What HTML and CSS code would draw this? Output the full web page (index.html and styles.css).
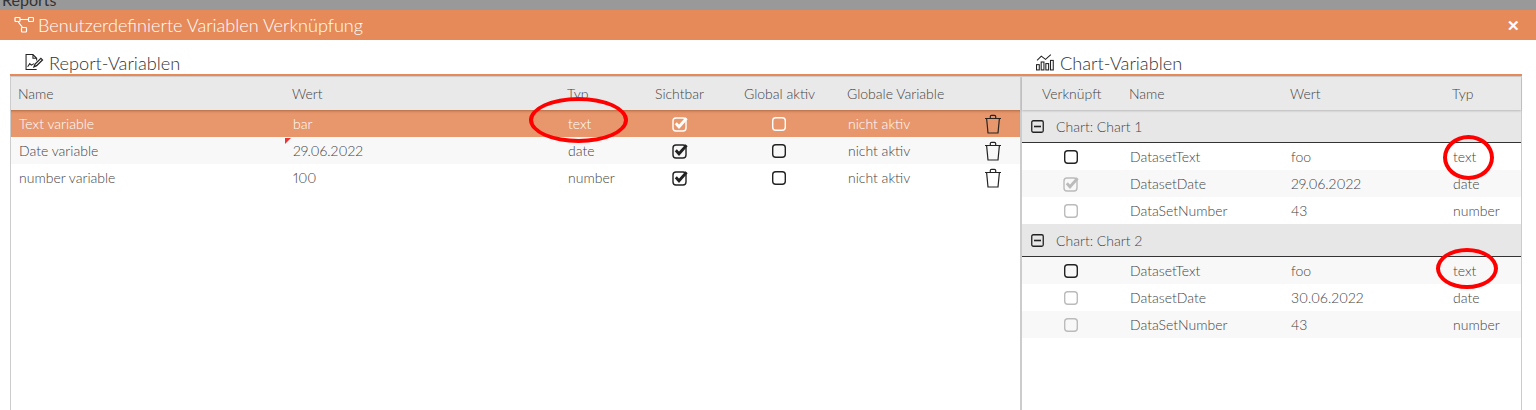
FILE: index.html
```html
<!DOCTYPE html>
<html lang="de">
<head>
<meta charset="utf-8">
<title>Benutzerdefinierte Variablen Verknüpfung</title>
<link rel="stylesheet" href="styles.css">
</head>
<body>
<svg class="defs" width="0" height="0" aria-hidden="true">
  <defs>
    <symbol id="check" viewBox="0 0 16 16">
      <rect x="1" y="2" width="13" height="13" rx="3" fill="none" stroke="currentColor" stroke-width="1.4"/>
      <path d="M3.8 7.2l3.2 3.6 7.6-8.6" fill="none" stroke="currentColor" stroke-width="2.8"/>
    </symbol>
    <symbol id="box" viewBox="0 0 16 16">
      <rect x="1.7" y="1.7" width="12.6" height="12.6" rx="3" fill="none" stroke="currentColor" stroke-width="1.4"/>
    </symbol>
    <symbol id="trash" viewBox="0 0 18 20">
      <path d="M1 4.5h16M2.6 4.5l1.4 14.5h10l1.4-14.5M6.3 4.5V2.6q0-1.3 1.3-1.3h2.8q1.3 0 1.3 1.3v1.9" fill="none" stroke="currentColor" stroke-width="1.2"/>
    </symbol>
    <symbol id="minus" viewBox="0 0 13 13">
      <rect x=".75" y=".75" width="11.5" height="11.5" rx="1.5" fill="none" stroke="currentColor" stroke-width="1.3"/>
      <path d="M3 6.5h7" stroke="currentColor" stroke-width="1.6"/>
    </symbol>
  </defs>
</svg>
<div class="backdrop"><span class="backdrop-text">Reports</span></div>
<header class="titlebar">
  <svg class="title-icon" viewBox="0 0 20 18" aria-hidden="true">
    <g fill="none" stroke="currentColor" stroke-width="1.2">
      <rect x="1" y="1.5" width="5" height="4" rx=".8"/>
      <rect x="14.5" y="1.5" width="5" height="4" rx=".8"/>
      <rect x="7.5" y="11.5" width="5" height="4.5" rx=".8"/>
      <path d="M6 3.5h8.5M4 5.5l4.5 6"/>
    </g>
  </svg>
  <span class="title-text">Benutzerdefinierte Variablen Verknüpfung</span>
  <span class="close">✕</span>
</header>
<main class="content">
  <section class="left">
    <h2 class="section-title">
      <svg class="section-icon" viewBox="0 0 18 17" aria-hidden="true">
        <g fill="none" stroke="#222" stroke-width="1">
          <path d="M11.5 15.5H1.5V1.5h6.5l3.5 3.5v2M8 1.5V5h3.5"/>
          <path d="M3 13l2-3 1.5 1.5L9 10"/>
          <path d="M9 13l1-2.5 5.5-5.5 1.5 1.5-5.5 5.5z" stroke-width="1.2"/>
        </g>
      </svg>
      Report-Variablen
    </h2>
    <div class="panel panel-left">
      <div class="row-l head">
        <span>Name</span><span>Wert</span><span>Typ</span><span>Sichtbar</span><span>Global aktiv</span><span>Globale Variable</span><span></span>
      </div>
      <div class="row-l selected">
        <span class="c1">Text variable</span><span class="c2">bar</span><span class="c3">text</span>
        <svg class="ic ic-check"><use href="#check"/></svg><svg class="ic ic-box"><use href="#box"/></svg>
        <span class="c6">nicht aktiv</span><svg class="ic-trash trash-dark"><use href="#trash"/></svg>
      </div>
      <div class="row-l alt">
        <span class="c1">Date variable</span><span class="c2 flagged">29.06.2022</span><span class="c3">date</span>
        <svg class="ic ic-check"><use href="#check"/></svg><svg class="ic ic-box"><use href="#box"/></svg>
        <span class="c6">nicht aktiv</span><svg class="ic-trash"><use href="#trash"/></svg>
      </div>
      <div class="row-l">
        <span class="c1">number variable</span><span class="c2">100</span><span class="c3">number</span>
        <svg class="ic ic-check"><use href="#check"/></svg><svg class="ic ic-box"><use href="#box"/></svg>
        <span class="c6">nicht aktiv</span><svg class="ic-trash"><use href="#trash"/></svg>
      </div>
    </div>
  </section>
  <section class="right">
    <h2 class="section-title">
      <svg class="section-icon" viewBox="0 0 18 17" aria-hidden="true">
        <g fill="none" stroke="#222" stroke-width="1">
          <path d="M1.5 7l4-4 4 3 5-4.5"/>
          <rect x="1" y="11" width="2.6" height="5"/>
          <rect x="5.4" y="8.5" width="2.6" height="7.5"/>
          <rect x="9.8" y="10" width="2.6" height="6"/>
          <rect x="14.2" y="7" width="2.6" height="9"/>
        </g>
      </svg>
      Chart-Variablen
    </h2>
    <div class="panel panel-right">
      <div class="row-r head head-r">
        <span>Verknüpft</span><span>Name</span><span>Wert</span><span>Typ</span>
      </div>
      <div class="group"><svg class="ic-minus"><use href="#minus"/></svg>Chart: Chart 1</div>
      <div class="row-r">
        <svg class="ic"><use href="#box"/></svg><span class="c1">DatasetText</span><span class="c2">foo</span><span class="c3">text</span>
      </div>
      <div class="row-r alt">
        <svg class="ic muted"><use href="#check"/></svg><span class="c1">DatasetDate</span><span class="c2">29.06.2022</span><span class="c3">date</span>
      </div>
      <div class="row-r">
        <svg class="ic muted"><use href="#box"/></svg><span class="c1">DataSetNumber</span><span class="c2">43</span><span class="c3">number</span>
      </div>
      <div class="group"><svg class="ic-minus"><use href="#minus"/></svg>Chart: Chart 2</div>
      <div class="row-r alt">
        <svg class="ic"><use href="#box"/></svg><span class="c1">DatasetText</span><span class="c2">foo</span><span class="c3">text</span>
      </div>
      <div class="row-r">
        <svg class="ic muted"><use href="#box"/></svg><span class="c1">DatasetDate</span><span class="c2">30.06.2022</span><span class="c3">date</span>
      </div>
      <div class="row-r alt">
        <svg class="ic muted"><use href="#box"/></svg><span class="c1">DataSetNumber</span><span class="c2">43</span><span class="c3">number</span>
      </div>
    </div>
  </section>
</main>
<div class="mark mark-1"></div>
<div class="mark mark-2"></div>
<div class="mark mark-3"></div>
</body>
</html>
```
FILE: styles.css
```css
* { box-sizing: border-box; }
html, body { margin: 0; height: 410px; overflow: hidden; background: #fff; }
body { font-family: Lato, "Open Sans", sans-serif; font-weight: 400; color: #555; position: relative; }
.defs { position: absolute; }
.backdrop { height: 10px; background: #999; overflow: hidden; }
.backdrop-text { display: block; margin: -10px 0 0 2px; font-size: 16px; line-height: 19px; color: #333; }
.titlebar { height: 30px; background: #e68a5a; color: #fff; display: flex; align-items: center; padding-left: 14px; }
.title-icon { width: 20px; height: 18px; margin-right: 4px; }
.title-text { font-size: 18.1px; font-weight: 300; flex: 1; color: #fff; }
.close { font-size: 15px; font-weight: 700; margin-right: 16px; color: #fff; }
.content { display: flex; padding-left: 10px; height: 370px; width: 1523px; }
.left { width: 1010px; display: flex; flex-direction: column; }
.right { width: 502px; display: flex; flex-direction: column; }
.section-title { margin: 0; height: 36px; border-bottom: 2px solid #e68a5a; display: flex; align-items: flex-end; font-size: 18.2px; font-weight: 300; color: #333; line-height: 22px; padding-left: 14px; }
.right .section-title { padding-left: 15px; }
.section-icon { width: 20px; height: 18px; margin: 0 5px 3px 0; }
.panel { flex: 1; border-top: 1px solid #ccc; }
.panel-left { border-left: 1px solid #ccc; }
.panel-right { border-left: 2px solid #ccc; border-right: 1px solid #ccc; }
.row-l, .row-r { display: grid; height: 27px; align-items: center; font-size: 14px; font-weight: 300; color: #444; font-variant-numeric: proportional-nums; }
.row-l { grid-template-columns: 274px 275px 88px 89px 103px 136px 1fr; padding-left: 8px; }
.row-r { grid-template-columns: 108px 161px 162px 1fr; }
.row-r .ic { justify-self: start; margin-left: 41px; }
.head { height: 33px; background: #e9e9e9; }
.row-l.head { padding-left: 7px; }
.head-r { grid-template-columns: 107px 161px 162px 1fr; box-shadow: 0 1px 2px rgba(0,0,0,.2); position: relative; }
.head-r span:first-child { margin-left: 20px; }
.selected { background: #e8976d; color: #fff; box-shadow: inset 0 3px 3px -2px rgba(120,60,20,.5); }
.alt { background: #f8f8f8; }
.ic { width: 16px; height: 16px; color: #222; }
.ic.muted { color: #bbb; }
.ic-check { margin-left: 16px; }
.ic-box { margin-left: 26px; }
.selected .ic { color: #fff; }
.ic-trash { width: 18px; height: 20px; color: #222; justify-self: start; }
.trash-dark { color: #2b2320; }
.flagged { position: relative; }
.flagged::before { content: ""; position: absolute; left: -8px; top: -4px; border-style: solid; border-width: 6px 6px 0 0; border-color: #e33 transparent transparent transparent; }
.group { height: 33px; background: #e7e7e7; border-bottom: 1px solid #333; display: flex; align-items: center; font-size: 14px; font-weight: 300; color: #444; padding-left: 9px; }
.ic-minus { width: 13px; height: 13px; margin-right: 12px; color: #222; }
.mark { position: absolute; border: 4px solid #f00; border-radius: 50%; }
.mark-1 { left: 529px; top: 97px; width: 99px; height: 46px; }
.mark-2 { left: 1443px; top: 135px; width: 51px; height: 45px; }
.mark-3 { left: 1436px; top: 248px; width: 62px; height: 41px; }
```
